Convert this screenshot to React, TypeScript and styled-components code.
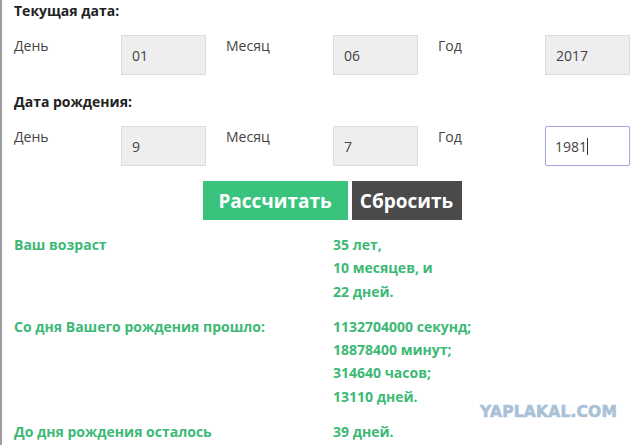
import { Fragment } from 'react';
import styled, { createGlobalStyle } from 'styled-components';

const GlobalStyle = createGlobalStyle`
  html, body {
    margin: 0;
    padding: 0;
    background: #ffffff;
    overflow: hidden;
  }
  body {
    font-family: 'Open Sans', 'Liberation Sans', sans-serif;
  }
`;

const Page = styled.div`
  position: relative;
  height: 445px;
  border-left: 2px solid #9e9e9e;
  box-sizing: border-box;
  overflow: hidden;
`;

const Form = styled.div`
  width: 636px;
  padding: 1px 0 0 12px;
`;

const SectionTitle = styled.div`
  font-size: 14px;
  line-height: 20px;
  font-weight: 700;
  color: #222222;
  margin-bottom: 14px;
`;

const FieldRow = styled.div`
  display: flex;
  margin-bottom: 17px;
`;

const Field = styled.div`
  display: flex;
  align-items: flex-start;
  width: 212px;
  flex: none;
`;

const FieldLabel = styled.label`
  width: 107px;
  flex: none;
  font-size: 14px;
  line-height: 20px;
  padding-top: 1px;
  color: #444444;
`;

const Input = styled.input`
  width: 85px;
  height: 40px;
  box-sizing: border-box;
  padding: 0 10px;
  font-family: 'Open Sans', 'Liberation Sans', sans-serif;
  font-size: 14px;
  color: #444444;
  border: 1px solid #dcdcdc;
  border-radius: 0;
  background: #eeeeee;
  outline: none;
`;

// focused input with a visible text caret
const FocusedInput = styled.div`
  width: 85px;
  height: 40px;
  box-sizing: border-box;
  padding: 0 9px;
  display: flex;
  align-items: center;
  font-size: 14px;
  color: #444444;
  border: 1px solid #a7a9dc;
  border-radius: 2px;
  background: #ffffff;
  box-shadow: 0 0 1px #c5c7ee;
`;

const Caret = styled.span`
  display: inline-block;
  width: 1px;
  height: 17px;
  background: #333333;
`;

const Buttons = styled.div`
  display: flex;
  justify-content: center;
  gap: 4px;
  margin-top: -2px;
  margin-bottom: 13px;
`;

const Button = styled.button<{ $variant: 'primary' | 'dark' }>`
  height: 39px;
  width: ${(p) => (p.$variant === 'primary' ? '145px' : '110px')};
  border: none;
  padding: 0;
  font-family: 'Open Sans', 'Liberation Sans', sans-serif;
  font-size: 19px;
  font-weight: 700;
  color: #ffffff;
  background: ${(p) => (p.$variant === 'primary' ? '#3ac37c' : '#4a4a4a')};
  cursor: pointer;
`;

const Results = styled.div`
  display: grid;
  grid-template-columns: 319px 1fr;
  row-gap: 12px;
  font-size: 14px;
  line-height: 23.25px;
  font-weight: 700;
  color: #3cb975;
`;

const ResultLabel = styled.div``;

const ResultValues = styled.div`
  display: flex;
  flex-direction: column;
`;

const Watermark = styled.div`
  position: absolute;
  left: 478px;
  top: 402px;
  font-family: 'DejaVu Sans', sans-serif;
  font-size: 15.5px;
  font-weight: 700;
  letter-spacing: 0.2px;
  color: #a9c1d7;
  -webkit-text-stroke: 0.6px #a9c1d7;
  line-height: 20px;
`;

function DateRow({ values, focusedLast }: { values: string[]; focusedLast?: boolean }) {
  const labels = ['День', 'Месяц', 'Год'];
  return (
    <FieldRow>
      {labels.map((label, i) => (
        <Field key={label}>
          <FieldLabel>{label}</FieldLabel>
          {focusedLast && i === 2 ? (
            <FocusedInput>
              {values[i]}
              <Caret />
            </FocusedInput>
          ) : (
            <Input readOnly value={values[i]} />
          )}
        </Field>
      ))}
    </FieldRow>
  );
}

const results: { label: string; values: string[] }[] = [
  { label: 'Ваш возраст', values: ['35 лет,', '10 месяцев, и', '22 дней.'] },
  {
    label: 'Со дня Вашего рождения прошло:',
    values: ['1132704000 секунд;', '18878400 минут;', '314640 часов;', '13110 дней.'],
  },
  { label: 'До дня рождения осталось', values: ['39 дней.'] },
];

export default function App() {
  return (
    <Page>
      <GlobalStyle />
      <Form>
        <SectionTitle>Текущая дата:</SectionTitle>
        <DateRow values={['01', '06', '2017']} />
        <SectionTitle>Дата рождения:</SectionTitle>
        <DateRow values={['9', '7', '1981']} focusedLast />
        <Buttons>
          <Button $variant="primary">Рассчитать</Button>
          <Button $variant="dark">Сбросить</Button>
        </Buttons>
        <Results>
          {results.map((r) => (
            <Fragment key={r.label}>
              <ResultLabel>{r.label}</ResultLabel>
              <ResultValues>
                {r.values.map((v) => (
                  <span key={v}>{v}</span>
                ))}
              </ResultValues>
            </Fragment>
          ))}
        </Results>
      </Form>
      <Watermark>YAPLAKAL.COM</Watermark>
    </Page>
  );
}
